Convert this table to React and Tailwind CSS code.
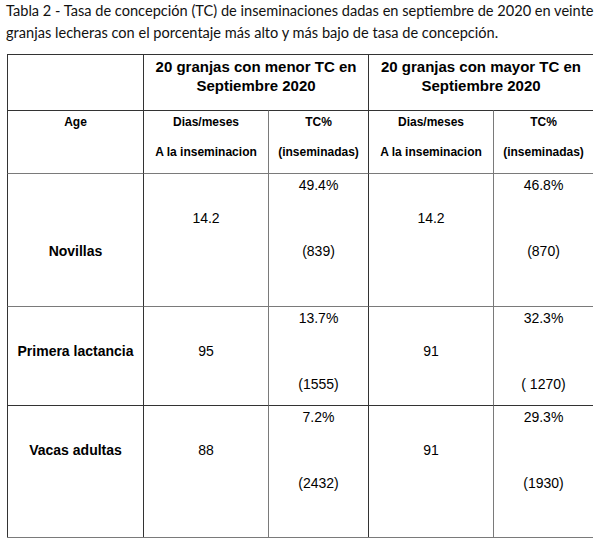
const dark = "border-[#333]";
const gray = "border-[#7a7a7a]";

const bodyRows = [
  {
    h: "Novillas",
    top: gray,
    cells: [["", "", "Novillas"], ["", "14.2"], ["49.4%", "", "(839)"], ["", "14.2"], ["46.8%", "", "(870)"]],
  },
  {
    h: "Primera lactancia",
    top: gray,
    cells: [["", "Primera lactancia"], ["", "95"], ["13.7%", "", "(1555)"], ["", "91"], ["32.3%", "", "( 1270)"]],
  },
  {
    h: "Vacas adultas",
    top: dark,
    cells: [["", "Vacas adultas"], ["", "88"], ["7.2%", "", "(2432)"], ["", "91"], ["29.3%", "", "(1930)"]],
  },
];

// left border colour of each column
const colLeft = [dark, dark, gray, dark, gray];

function Slots({ items, slot = "h-[33px]", bold = false }) {
  return (
    <div className="flex flex-col pt-[1px]">
      {items.map((t, i) => (
        <div key={i} className={`${slot} leading-[20px] whitespace-pre ${bold ? "font-bold" : ""}`}>
          {t}
        </div>
      ))}
    </div>
  );
}

export default function App() {
  return (
    <div className="bg-white w-[600px] h-[543px] text-black">
      {/* caption */}
      <div
        className="pl-[6px] text-[14.6px] leading-[22px] text-[#111] whitespace-nowrap"
        style={{ fontFamily: "Lato, 'Open Sans', sans-serif" }}
      >
        Tabla 2 - Tasa de concepción (TC) de inseminaciones dadas en septiembre de 2020 en veinte
        <br />
        granjas lecheras con el porcentaje más alto y más bajo de tasa de concepción.
      </div>

      {/* table */}
      <div
        className="mt-[10px] ml-[7px] w-[586px] grid grid-cols-[136px_125px_100px_125px_100px] grid-rows-[56px_63px_133px_99px_132px] border-b border-[#7a7a7a] text-center"
        style={{ fontFamily: "'Liberation Sans', Arial, sans-serif" }}
      >
        {/* header row 1 */}
        <div className={`border-l border-t ${dark}`} />
        <div className={`col-span-2 border-l border-t ${dark} pt-[2px] text-[15px] leading-[19px] font-bold`}>
          20 granjas con menor TC en
          <br />
          Septiembre 2020
        </div>
        <div className={`col-span-2 border-l border-t ${dark} pt-[2px] text-[15px] leading-[19px] font-bold`}>
          20 granjas con mayor TC en
          <br />
          Septiembre 2020
        </div>

        {/* header row 2 */}
        {[["Age"], ["Dias/meses", "A la inseminacion"], ["TC%", "(inseminadas)"], ["Dias/meses", "A la inseminacion"], ["TC%", "(inseminadas)"]].map(
          (items, i) => (
            <div key={i} className={`border-l border-t ${colLeft[i]} border-t-[#333] text-[12px]`}>
              <Slots items={items} slot="h-[30px]" bold />
            </div>
          )
        )}

        {/* body rows */}
        {bodyRows.map((row) =>
          row.cells.map((items, i) => (
            <div
              key={row.h + i}
              className={`border-l border-t ${colLeft[i]} ${row.top === gray ? "border-t-[#7a7a7a]" : "border-t-[#333]"} text-[14px]`}
            >
              <Slots items={items} bold={i === 0} />
            </div>
          ))
        )}
      </div>
    </div>
  );
}
